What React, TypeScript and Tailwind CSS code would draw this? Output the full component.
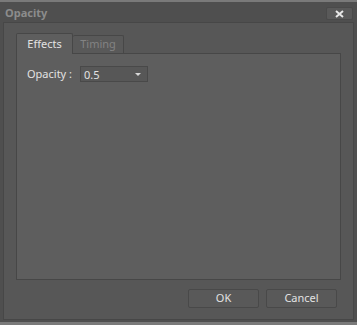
import React from 'react';

const font = { fontFamily: '"Noto Sans", "DejaVu Sans", sans-serif' };

const App: React.FC = () => {
  return (
    <div
      className="w-[357px] h-[325px] bg-[#7a7a7a] pt-[2px] pb-[3px] flex flex-col text-[11px]"
      style={font}
    >
      <div className="flex-1 bg-[#4f4f4f] flex flex-col px-[3px]">
        {/* title bar */}
        <div className="h-[20px] flex items-center justify-between pl-[2px] pr-[1px]">
          <span className="text-[#8c8c8c] font-bold text-[11px] leading-none">Opacity</span>
          <button className="w-[27px] h-[13px] rounded-[2px] bg-[#595959] border border-[#4a4a4a] flex items-center justify-center mt-[3px]">
            <svg width="9" height="8" viewBox="0 0 9 8">
              <path d="M1 1 L8 7 M8 1 L1 7" stroke="#e8e8e8" strokeWidth="2" />
            </svg>
          </button>
        </div>

        {/* body */}
        <div className="flex-1 bg-[#575757] border border-[#474747] mb-[2px] flex flex-col">
          <div className="px-[12px] pt-[10px]">
            <div className="flex items-end h-[20px]">
              <div className="h-[21px] w-[57px] -mb-px relative z-10 bg-[#5e5e5e] border border-[#474747] border-b-0 rounded-t-[2px] flex items-center justify-center text-[#e2e2e2]">
                Effects
              </div>
              <div className="h-[18px] w-[51px] bg-[#595959] border border-[#474747] border-b-0 border-l-0 rounded-t-[2px] flex items-center justify-center text-[#838383]">
                Timing
              </div>
            </div>
            <div className="h-[227px] bg-[#5e5e5e] border border-[#474747] px-[10px] pt-[12px]">
              <div className="flex items-center gap-[8px]">
                <span className="text-[#e2e2e2]">Opacity :</span>
                <div className="w-[68px] h-[16px] bg-[#575757] border border-[#494949] flex items-center justify-between pl-[3px] pr-[6px]">
                  <span className="text-[#e2e2e2] leading-none">0.5</span>
                  <svg width="6" height="3" viewBox="0 0 6 3">
                    <path d="M0 0 L6 0 L3 3 Z" fill="#d8d8d8" />
                  </svg>
                </div>
              </div>
            </div>
          </div>

          <div className="flex justify-end gap-[7px] pr-[16px] pt-[9px]">
            <button className="w-[71px] h-[19px] bg-[#595959] border border-[#494949] rounded-[2px] text-[#e2e2e2] flex items-center justify-center">
              OK
            </button>
            <button className="w-[71px] h-[19px] bg-[#595959] border border-[#494949] rounded-[2px] text-[#e2e2e2] flex items-center justify-center">
              Cancel
            </button>
          </div>
        </div>
      </div>
    </div>
  );
};

export default App;
